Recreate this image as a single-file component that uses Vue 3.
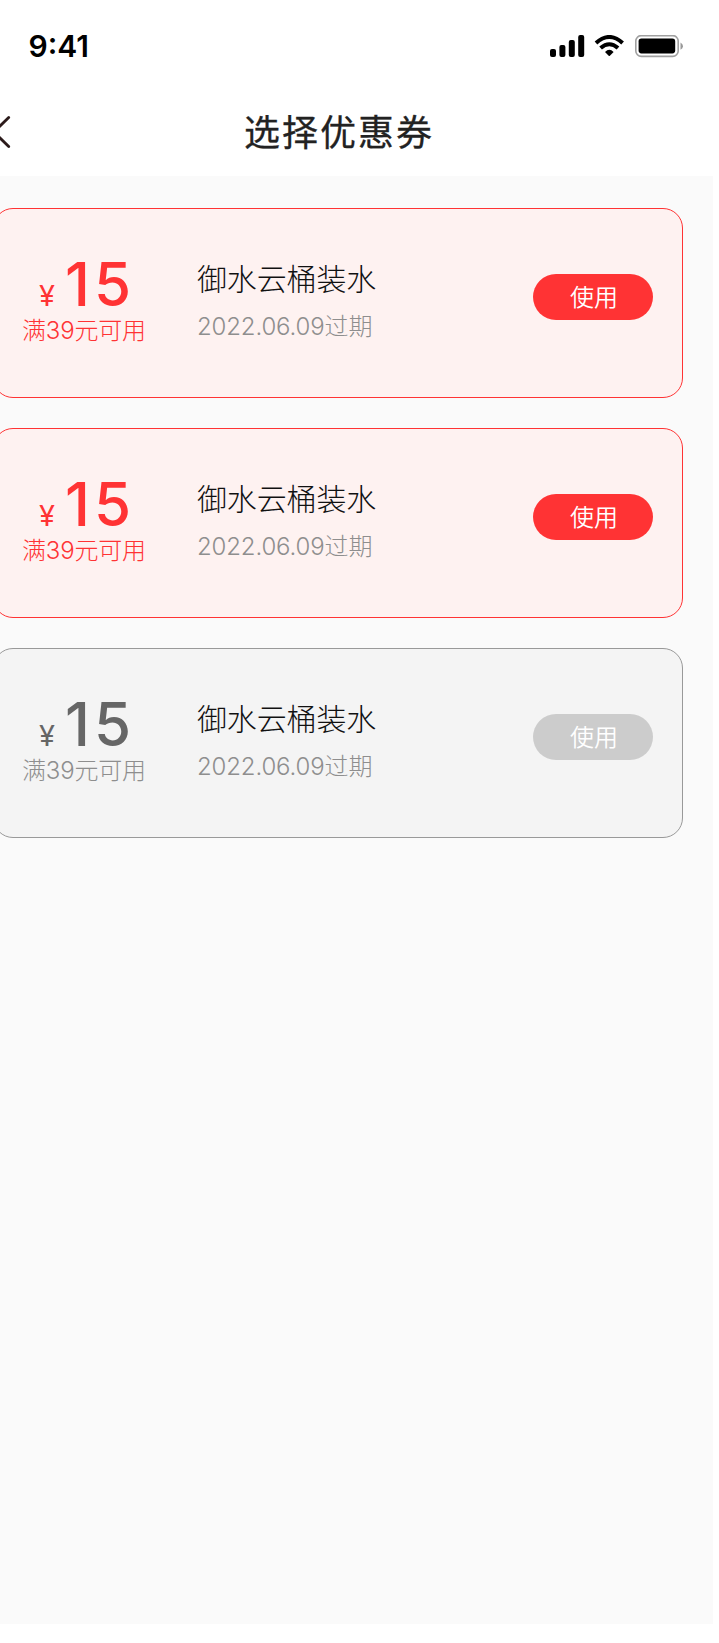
<script setup>
const coupons = [
  { id: 1, amount: 15, rule: '满39元可用', name: '御水云桶装水', expiry: '2022.06.09过期', usable: true },
  { id: 2, amount: 15, rule: '满39元可用', name: '御水云桶装水', expiry: '2022.06.09过期', usable: true },
  { id: 3, amount: 15, rule: '满39元可用', name: '御水云桶装水', expiry: '2022.06.09过期', usable: false },
]
</script>

<template>
  <div class="screen">
    <header class="header">
      <div class="status">
        <span class="time">9:41</span>
        <svg class="indicators" width="134" height="24" viewBox="0 0 134 24">
          <rect x="0" y="14" width="6" height="8" rx="2" />
          <rect x="9.4" y="10" width="6" height="12" rx="2" />
          <rect x="18.8" y="5" width="6" height="17" rx="2" />
          <rect x="28.2" y="0" width="6" height="22" rx="2" />
          <g fill="none" stroke="#000" stroke-width="4">
            <path d="M46 8Q59.3-4 72.6 8" />
            <path d="M50.6 13.1Q59.3 5.4 68 13.1" />
          </g>
          <path d="M55 17Q59.3 12.6 63.6 17L59.9 20.8Q59.3 21.4 58.7 20.8Z" />
          <rect x="85.8" y="0.6" width="42.4" height="20.8" rx="5.5" fill="none" stroke="#a0a0a0" stroke-width="1.6" />
          <rect x="88.6" y="3.6" width="36.6" height="14.8" rx="2.8" />
          <path d="M130.5 7.5Q133 9 133 11.2T130.5 14.8Z" fill="#999" />
        </svg>
      </div>
      <nav class="nav">
        <svg class="back" width="12" height="34" viewBox="0 0 12 34">
          <path d="M8.7 2.5L-6 17L8.7 31.5" fill="none" stroke="#2c1b1b" stroke-width="2.8" stroke-linecap="round" />
        </svg>
        <h1 class="title">选择优惠券</h1>
      </nav>
    </header>
    <main class="list">
      <article v-for="c in coupons" :key="c.id" class="coupon" :class="{ disabled: !c.usable }">
        <div class="value">
          <div class="price"><span class="yen">¥</span><span class="amount">{{ c.amount }}</span></div>
          <div class="rule">{{ c.rule }}</div>
        </div>
        <div class="info">
          <div class="name">{{ c.name }}</div>
          <div class="expiry">{{ c.expiry }}</div>
        </div>
        <button class="use" :disabled="!c.usable">使用</button>
      </article>
    </main>
  </div>
</template>

<style>
body {
  background: #fff;
}
</style>

<style scoped>
.screen {
  width: 713px;
  height: 1624px;
  overflow: hidden;
  background: #fafafa;
  font-family: Inter, "Noto Sans CJK SC", sans-serif;
  white-space: nowrap;
}
.header {
  width: 719px;
  height: 176px;
  background: #fff;
}
.status {
  display: flex;
  justify-content: space-between;
  height: 88px;
  padding: 35px 35px 0 28.5px;
  box-sizing: border-box;
}
.time {
  font-size: 30px;
  line-height: 22px;
  font-weight: 600;
  color: #000;
}
.indicators {
  display: block;
}
.nav {
  display: flex;
  align-items: center;
  height: 88px;
}
.back {
  flex: none;
}
.title {
  margin: 2px 0 0 232px;
  font-size: 36px;
  line-height: 50px;
  font-weight: 400;
  letter-spacing: 2px;
  color: #222;
  -webkit-text-stroke: 0.3px #222;
}
.list {
  display: flex;
  flex-direction: column;
  gap: 30px;
  width: 690px;
  margin-left: -7px;
  padding-top: 32px;
}
.coupon {
  display: flex;
  height: 190px;
  box-sizing: border-box;
  border: 1px solid #ff3334;
  border-radius: 20px;
  background: #fef2f1;
  color: #ff3334;
}
.value {
  width: 175px;
  padding: 45px 0 0 28px;
  box-sizing: border-box;
}
.price {
  display: flex;
  align-items: baseline;
  height: 60px;
  padding-left: 17px;
  line-height: 60px;
}
.yen {
  width: 26px;
  font-size: 29px;
  font-weight: 400;
}
.amount {
  font-size: 60px;
  font-weight: 500;
  letter-spacing: 4px;
}
.rule {
  font-size: 24px;
  line-height: 34px;
  font-weight: 300;
  letter-spacing: -0.2px;
}
.info {
  flex: 1;
  padding: 49px 0 0 28px;
}
.name {
  font-size: 30px;
  line-height: 42px;
  font-weight: 300;
  letter-spacing: -0.15px;
  color: #111;
}
.expiry {
  margin-top: 10px;
  font-size: 24px;
  line-height: 34px;
  font-weight: 300;
  letter-spacing: -0.15px;
  color: #8e8e8e;
}
.use {
  width: 120px;
  height: 46px;
  margin: 65px 29px 0 0;
  padding: 0 0 2px 2px;
  border: 0;
  border-radius: 23px;
  background: #ff3334;
  color: #fff;
  font: 350 24px/44px "Noto Sans CJK SC", sans-serif;
}
.disabled {
  border-color: #999;
  background: #f4f4f4;
  color: #8e8e8e;
}
.disabled .price {
  color: #666;
}
.disabled .use {
  background: #ccc;
}
</style>
